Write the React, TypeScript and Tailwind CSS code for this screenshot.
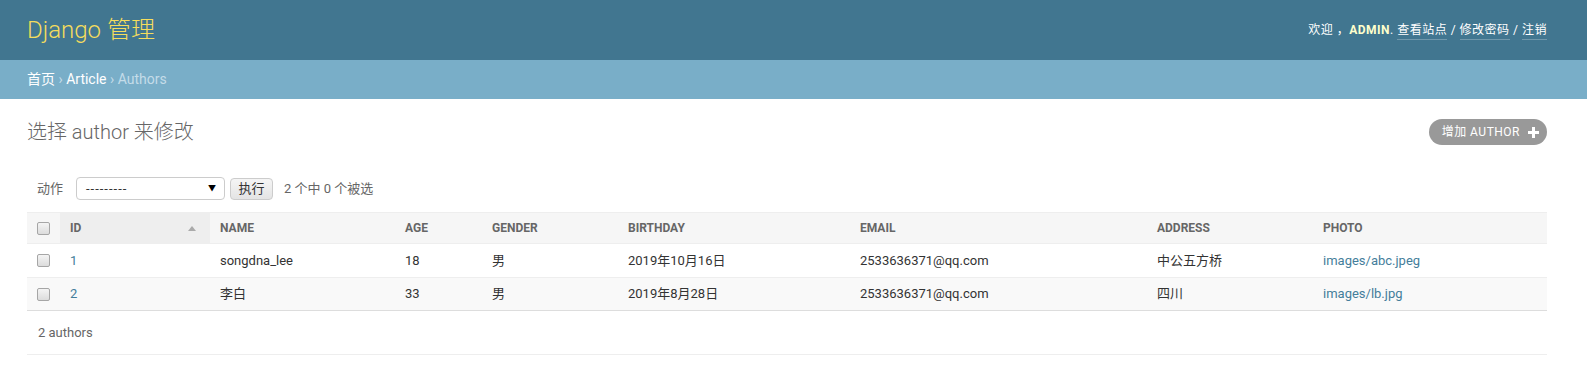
const FONT = "font-['Roboto','Noto_Sans_CJK_SC',sans-serif]"

const columns = [
  { key: 'id', label: 'ID', width: 'w-[150px]', sorted: true },
  { key: 'name', label: 'Name', width: 'w-[185px]' },
  { key: 'age', label: 'Age', width: 'w-[87px]' },
  { key: 'gender', label: 'Gender', width: 'w-[136px]' },
  { key: 'birthday', label: 'Birthday', width: 'w-[232px]' },
  { key: 'email', label: 'Email', width: 'w-[297px]' },
  { key: 'address', label: 'Address', width: 'w-[166px]' },
  { key: 'photo', label: 'Photo', width: 'flex-1' },
]

const rows = [
  {
    id: '1',
    name: 'songdna_lee',
    age: '18',
    gender: '男',
    birthday: '2019年10月16日',
    email: '2533636371@qq.com',
    address: '中公五方桥',
    photo: 'images/abc.jpeg',
  },
  {
    id: '2',
    name: '李白',
    age: '33',
    gender: '男',
    birthday: '2019年8月28日',
    email: '2533636371@qq.com',
    address: '四川',
    photo: 'images/lb.jpg',
  },
]

function Checkbox() {
  return (
    <span className="block w-[13px] h-[13px] rounded-[2px] border border-[#a6a6a6] bg-gradient-to-b from-[#f4f4f4] to-[#dcdcdc]" />
  )
}

export default function App() {
  return (
    <div className={`${FONT} bg-white min-h-[371px] text-[13px] text-[#333]`}>
      {/* header */}
      <div className="h-[60px] bg-[#417690] flex items-center justify-between pl-[27px] pr-[40px]">
        <h1 className="text-[24px] font-light text-[#f5dd5d] leading-none">Django 管理</h1>
        <div className="text-[12px] tracking-[0.5px] uppercase text-white flex items-center">
          <span>欢迎 ，</span>
          <strong className="font-bold text-[#ffc]">admin</strong>
          <span>.&nbsp;</span>
          <span className="border-b border-white/25">查看站点</span>
          <span>&nbsp;/&nbsp;</span>
          <span className="border-b border-white/25">修改密码</span>
          <span>&nbsp;/&nbsp;</span>
          <span className="border-b border-white/25">注销</span>
        </div>
      </div>

      {/* breadcrumbs */}
      <div className="h-[39px] bg-[#79aec8] flex items-center pl-[27px] text-[14px] text-[#c4dce8]">
        <span className="text-white">首页</span>
        <span>&nbsp;›&nbsp;</span>
        <span className="text-white">Article</span>
        <span>&nbsp;›&nbsp;</span>
        <span>Authors</span>
      </div>

      <div className="pl-[27px] pr-[40px]">
        <div className="mt-[20px] h-[26px] flex items-center justify-between">
          <h2 className="text-[20px] font-light text-[#666] leading-none">选择 author 来修改</h2>
          <div className="h-[26px] rounded-full bg-[#999] text-white text-[12px] tracking-[0.5px] uppercase flex items-center pl-[13px] pr-[8px] gap-[8px]">
            <span>增加 author</span>
            <svg width="11" height="11" viewBox="0 0 11 11">
              <path d="M4 0h3v4h4v3H7v4H4V7H0V4h4z" fill="#fff" />
            </svg>
          </div>
        </div>

        {/* actions */}
        <div className="mt-[32px] h-[23px] flex items-center text-[13px] text-[#666]">
          <span className="ml-[10px] w-[39px]">动作</span>
          <div className="w-[149px] h-[23px] border border-[#ccc] rounded-[4px] flex items-center justify-between pl-[9px] pr-[8px] text-[#333]">
            <span className="tracking-[1px]">---------</span>
            <span className="text-[8px] text-black">▼</span>
          </div>
          <div className="ml-[5px] w-[43px] h-[22px] border border-[#ccc] rounded-[4px] bg-gradient-to-b from-[#f5f5f5] to-[#e4e4e4] flex items-center justify-center text-[#333]">
            执行
          </div>
          <span className="ml-[11px]">2 个中 0 个被选</span>
        </div>

        {/* table */}
        <div className="mt-[12px] border-b border-[#ddd]">
          <div className="flex h-[32px] bg-[#f6f6f6] border-y border-[#eee] text-[12px] font-bold uppercase text-[#666]">
            <div className="w-[33px] pl-[10px] flex items-center">
              <Checkbox />
            </div>
            {columns.map((c) => (
              <div
                key={c.key}
                className={`${c.width} flex items-center justify-between px-[10px] ${c.sorted ? 'bg-[#eee]' : ''}`}
              >
                <span>{c.label}</span>
                {c.sorted && (
                  <svg width="8" height="5" viewBox="0 0 8 5" className="mr-[4px]">
                    <path d="M4 0L8 5H0z" fill="#aaa" />
                  </svg>
                )}
              </div>
            ))}
          </div>
          {rows.map((r, i) => (
            <div
              key={r.id}
              className={`flex h-[33px] items-center ${i % 2 === 1 ? 'bg-[#f9f9f9]' : 'bg-white'} ${i > 0 ? 'border-t border-[#eee]' : ''}`}
            >
              <div className="w-[33px] pl-[10px] flex items-center">
                <Checkbox />
              </div>
              {columns.map((c) => {
                const v = r[c.key as keyof typeof r]
                const link = c.key === 'id' || c.key === 'photo'
                return (
                  <div
                    key={c.key}
                    className={`${c.width} px-[10px] ${link ? 'text-[#447e9b]' : 'text-[#333]'}`}
                  >
                    {v}
                  </div>
                )
              })}
            </div>
          ))}
        </div>

        <div className="h-[44px] flex items-center pl-[11px] text-[#666] border-b border-[#eee]">2 authors</div>
      </div>
    </div>
  )
}
